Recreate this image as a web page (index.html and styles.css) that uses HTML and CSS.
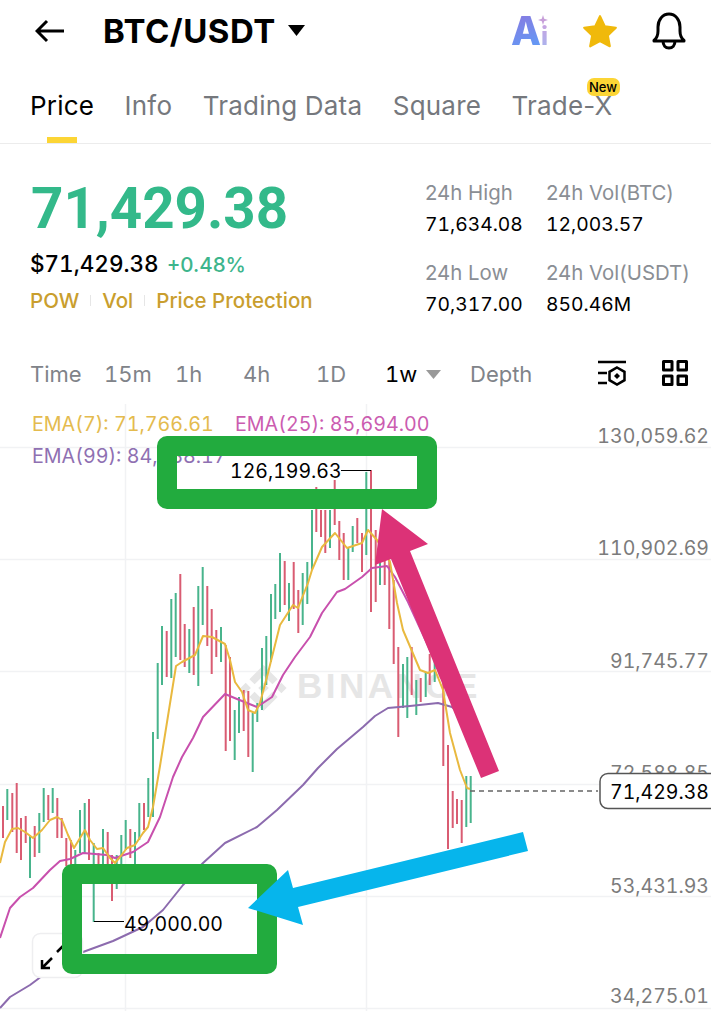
FILE: index.html
```html
<!DOCTYPE html>
<html lang="en">
<head>
<meta charset="utf-8">
<title>BTC/USDT</title>
<link rel="stylesheet" href="styles.css">
</head>
<body>
<div class="page">
  <header class="topbar">
    <svg class="back" viewBox="0 0 30 24" width="30" height="24"><path d="M29 12H2M12 2 2 12l10 10"/></svg>
    <h1 class="pair">BTC/USDT</h1>
    <svg class="pair-caret" viewBox="0 0 17 11" width="17" height="11"><path d="M0 0h17L8.500 11z"/></svg>
    <div class="top-icons">
      <div class="ai"><span class="ai-a">A</span><span class="ai-i">i</span>
        <svg class="spark" viewBox="0 0 10 10" width="10" height="10"><path d="M5 0 6.200 3.800 10 5 6.200 6.200 5 10 3.800 6.200 0 5 3.800 3.800z"/></svg>
      </div>
      <svg class="star" viewBox="0 0 36 34" width="38" height="36"><path d="M18 3l4.600 9.600 10.400 1.400-7.600 7.200 1.900 10.300L18 26.500 8.700 31.500l1.900-10.300L3 14l10.400-1.400z"/></svg>
      <svg class="bell" viewBox="0 0 36 38" width="36" height="38"><path d="M3 28.500c3-2.500 4-5 4-9.500v-4C7 8 11.500 2 18 2s11 6 11 13v4c0 4.500 1 7 4 9.500v.5H3zM12 29c0 4.500 2.500 7 6 7s6-2.500 6-7"/></svg>
    </div>
  </header>

  <nav class="tabs">
    <span class="tab tab-active">Price</span>
    <span class="tab">Info</span>
    <span class="tab">Trading Data</span>
    <span class="tab">Square</span>
    <span class="tab tab-new">Trade-X<span class="badge">New</span></span>
  </nav>

  <section class="summary">
    <div class="summary-main">
      <div class="last-price">71,429.38</div>
      <div class="fiat-row"><span class="fiat">$71,429.38</span><span class="change">+0.48%</span></div>
      <div class="tags"><span>POW</span><i class="tag-sep"></i><span>Vol</span><i class="tag-sep"></i><span>Price Protection</span></div>
    </div>
    <dl class="stats">
      <div class="stat"><dt>24h High</dt><dd>71,634.08</dd></div>
      <div class="stat"><dt>24h Vol(BTC)</dt><dd>12,003.57</dd></div>
      <div class="stat"><dt>24h Low</dt><dd>70,317.00</dd></div>
      <div class="stat"><dt>24h Vol(USDT)</dt><dd>850.46M</dd></div>
    </dl>
  </section>

  <div class="intervals">
    <span>Time</span><span>15m</span><span>1h</span><span>4h</span><span>1D</span>
    <span class="interval-active">1w<svg class="interval-caret" viewBox="0 0 15 9" width="15" height="9"><path d="M0 0h15L7.500 9z"/></svg></span>
    <span>Depth</span>
    <svg class="tool-icon" viewBox="0 0 30 28" width="30" height="28"><path d="M1 3h28M1 14h9M1 24h9"/><path d="M20 8.500l7.500 4.300v8.400L20 25.500l-7.500-4.300v-8.400z"/><path class="tool-dot" d="M20 14l3 3-3 3-3-3z"/></svg>
    <svg class="tool-icon tool-grid" viewBox="0 0 28 28" width="28" height="28"><path d="M2.500 2.500h8.500v8.500H2.500zM17 2.500h8.500v8.500H17zM2.500 17h8.500v8.500H2.500zM17 17h8.500v8.500H17z"/></svg>
  </div>

  <section class="chart">
    <svg class="chart-svg" viewBox="0 404 711 607" width="711" height="607">
      <path class="grid" d="M0 447.500H711M0 559.500H711M0 671.500H711M0 784.500H711M0 896.500H711M0 1008.500H711M125.500 404V1011M366.500 404V1011"/>
      <g class="watermark">
        <g transform="translate(240.500 665) scale(1.92)"><path d="M7.340 10.080 12 5.420l4.660 4.660 2.710-2.710L12 0 4.630 7.370zM0 12l2.710-2.710L5.420 12l-2.710 2.710zM7.340 13.920 12 18.580l4.660-4.660 2.710 2.700L12 24l-7.370-7.370zM18.580 12l2.710-2.710L24 12l-2.710 2.710zM14.750 12 12 9.250 9.970 11.280l-.23.240-.49.480L12 14.750z"/></g>
        <text class="wm-text" x="297" y="698">BINANCE</text>
      </g>
      <path class="candle-down" d="M3 806V838M12.300 793V832M16.700 783V853M21 818V860M25.700 816V843M34.700 826V857M48.300 795V820M57.300 798V838M61.700 818V838M66.300 838V866M71 840V866M89 799V860M98.500 853V866M107.700 832V866M112 855V901M130.300 829V858M144 803V830M166.700 631V677M180.300 574V660M184.700 624V667M193.700 607V675M207.300 586V646M211.700 609V674M216.300 630V657M225.700 645V751M230 657V741M243.700 690V731M248.300 691V757M284.700 561V605M293.700 562V609M298.300 590V633M316.300 487V532M321 510V537M325.300 510V553M334.700 480V525M339.300 521V560M343.700 533V580M357.300 518V543M362 533V572M371 470V612M375.700 530V602M384.700 555V585M389.300 560V629M393.700 580V664M398.300 647V737M411.700 647V695M420.700 678V702M429.700 654V685M443.300 683V766M448 745V849M452.700 791V828M457 799V824M461.700 800V843"/>
      <path class="candle-up" d="M7.300 789V820M30 835V878M39.300 813V853M43.700 788V822M52.700 788V813M75.300 850V866M80 810V853M84.700 803V853M93.700 843V922M103 829V866M116.700 855V889M121.300 835V866M125.700 820V850M135 832V866M139.300 803V840M148.300 778V817M153 732V817M157.700 663V739M162 626V685M171.300 599V678M175.700 593V657M189.300 629V673M198.300 586V686M202.700 567V625M221 627V662M234.700 710V760M239 697V733M252.700 713V772M257.300 703V722M262 648V710M266.300 636V685M271 594V662M275.300 584V619M280 553V612M289 583V621M302.700 573V625M307.300 562V604M312 510V570M330 510V548M348.300 548V580M352.700 526V552M366.300 472V555M380 553V585M403 664V708M407.300 657V718M416.300 680V715M425.700 672V697M434.700 660V682M466.300 776V827M470.700 776V823"/>
      <path class="ema99" d="M0 1008 10 997 30 985 50 970 83 952 113 941 143 927 163 910 183 885 203 863 225 843 257 827 277 810 303 785 318 768 337 749 363 727 375 716 388 708 410 706 438 703 452 707 469 722"/>
      <path class="ema25" d="M0 938 10 908 20 897 33 888 50 870 60 861 70 859 83 853 107 855 115 858 133 852 148 842 160 817 173 777 182 757 193 738 203 717 225 694 237 699 247 703 257 707 272 697 283 675 295 657 310 637 322 613 337 592 345 589 362 577 372 568 387 566 395 577 408 602 430 650 450 690 469 705"/>
      <path class="ema7" d="M0 863 5 842 12 829 18 828 25 832 33 838 42 830 50 820 57 817 62 820 68 835 74 848 80 838 85 830 90 840 97 849 103 848 110 858 115 863 120 857 127 848 135 845 143 833 148 827 153 807 160 766 176 666 182 662 195 655 203 636 212 637 225 644 230 660 235 682 242 692 248 710 255 713 260 703 268 673 280 625 293 605 298 608 308 583 312 570 322 547 335 533 347 548 362 543 368 530 377 540 390 562 397 603 403 630 420 670 428 673 435 670 443 690 450 733 460 770 467 788 470 789"/>
      <text class="legend legend-ema7" x="32" y="431">EMA(7): 71,766.61</text>
      <text class="legend legend-ema25" x="235" y="431">EMA(25): 85,694.00</text>
      <text class="legend legend-ema99" x="32" y="463">EMA(99): 84,688.17</text>
      <g class="axis">
        <text x="709" y="443">130,059.62</text>
        <text x="709" y="555">110,902.69</text>
        <text x="709" y="668">91,745.77</text>
        <text x="709" y="780">72,588.85</text>
        <text x="709" y="893">53,431.93</text>
        <text x="709" y="1003">34,275.01</text>
      </g>
      <path class="price-dash" d="M470 791H598"/>
      <rect class="price-tag" x="600" y="773.500" width="130" height="35" rx="8"/>
      <text class="price-tag-text" x="709" y="799">71,429.38</text>
      <rect class="expand-box" x="32.500" y="933.500" width="50" height="44" rx="8"/>
      <path class="expand-arrow" d="M42 968 52 958M42 960v8h8M57 952 67 942"/>
      <path class="leader" d="M341 470.500H371M94 921.500H124"/>
      <text class="extreme" x="230" y="478">126,199.63</text>
      <text class="extreme" x="124" y="931">49,000.00</text>
      <rect class="frame" x="167" y="446" width="260" height="53"/>
      <rect class="frame" x="72" y="874" width="195" height="90"/>
      <polygon class="arrow-pink" points="382,509 428,544 410,551 499,771 481,778 391,559 375,565"/>
      <polygon class="arrow-blue" points="248,908 288,870 293,888 523,832 528,851 298,907 303,925"/>
    </svg>
  </section>
</div>
</body>
</html>
```

FILE: styles.css
```css
* { box-sizing: border-box; margin: 0; padding: 0; }
html, body { background: #fff; }
body { font-family: Inter, "Liberation Sans", sans-serif; color: #000; overflow: hidden; }
.page { width: 711px; height: 1011px; overflow: hidden; display: flex; flex-direction: column; }

.topbar { height: 62px; display: flex; align-items: center; padding-left: 35px; }
.back { fill: none; stroke: #000; stroke-width: 3; margin-right: 38px; }
.pair { font-size: 33px; font-weight: 700; line-height: 40px; letter-spacing: .5px; }
.pair-caret { fill: #000; margin-left: 12px; }
.top-icons { margin-left: auto; display: flex; align-items: center; padding-right: 24px; }
.ai { position: relative; width: 40px; height: 34px; display: flex; align-items: flex-end; font-weight: 800; line-height: 1; }
.ai-a { font-size: 39px; line-height: 34px; background: linear-gradient(160deg, #8a79e0, #5f9cf7); -webkit-background-clip: text; background-clip: text; color: transparent; }
.ai-i { font-size: 25px; line-height: 24px; background: linear-gradient(180deg, #c9a3e0, #a9b4ee); -webkit-background-clip: text; background-clip: text; color: transparent; }
.spark { position: absolute; left: 27px; top: 1px; fill: #c79fd9; }
.star { fill: #f0b90b; stroke: #f0b90b; stroke-width: 2; stroke-linejoin: round; margin-left: 30px; margin-right: 32px; }
.bell { fill: none; stroke: #000; stroke-width: 3; stroke-linejoin: round; }

.tabs { height: 82px; display: flex; gap: 30.500px; padding: 26px 0 0 30px; border-bottom: 1px solid #ececec; }
.tab { position: relative; font-size: 26px; line-height: 36px; letter-spacing: .2px; color: #75787d; height: 36px; }
.tab-active { color: #000; }
.tab-active::after { content: ""; position: absolute; left: 17px; top: 49px; width: 30px; height: 6px; background: #fcd535; }
.badge { position: absolute; left: 75px; top: -10px; width: 33px; height: 18px; border-radius: 7px; background: #fcd535; color: #000; font-size: 13px; font-weight: 500; line-height: 18px; letter-spacing: 0; text-align: center; }

.summary { height: 204px; display: flex; padding: 34px 0 0 31px; }
.summary-main { width: 394px; }
.last-price { font-family: Roboto, sans-serif; font-size: 56.500px; line-height: 62px; font-weight: 700; color: #33b98a; }
.fiat-row { display: flex; align-items: baseline; gap: 8px; margin-top: 8px; margin-left: -1px; }
.fiat { font-size: 22.500px; line-height: 32px; font-weight: 500; font-variant-numeric: tabular-nums; }
.change { font-size: 20.500px; font-weight: 500; color: #3db58c; }
.tags { display: flex; align-items: center; gap: 11px; margin-top: 7px; margin-left: -1px; font-size: 20.500px; line-height: 28px; font-weight: 500; color: #c99e2e; }
.tag-sep { width: 1px; height: 11px; background: #e6e6e6; }
.stats { display: grid; grid-template-columns: 121px 1fr; row-gap: 18px; align-content: start; }
.stat dt { font-size: 20.400px; line-height: 30px; color: #8a8e94; }
.stat dd { font-size: 19.300px; line-height: 32px; color: #000; font-variant-numeric: tabular-nums; }

.intervals { height: 57px; display: grid; grid-template-columns: 74px 71px 68px 73px 69px 85px 127px 64px 28px; align-items: center; padding: 0 0 3px 30px; font-size: 22px; font-variant-numeric: tabular-nums; color: #808389; }
.interval-active { color: #000; display: flex; align-items: center; gap: 9px; }
.interval-caret { fill: #999; }
.tool-icon { fill: none; stroke: #000; stroke-width: 2.500; margin-bottom: 2px; }
.tool-dot { fill: #000; stroke: none; }
.tool-grid { stroke-width: 3; stroke-linejoin: round; }

.chart { height: 607px; }
.chart-svg { display: block; font-variant-numeric: tabular-nums; }
.grid { fill: none; stroke: #f1f2f4; stroke-width: 1.500; }
.watermark { fill: #e6e6e6; }
.wm-text { font-family: "Liberation Sans", sans-serif; font-weight: 700; font-size: 35px; letter-spacing: 3.500px; }
.candle-down, .candle-up { fill: none; stroke-width: 2; }
.candle-down { stroke: #d95c72; }
.candle-up { stroke: #48b48c; }
.ema7, .ema25, .ema99 { fill: none; stroke-width: 2; stroke-linejoin: round; }
.ema7 { stroke: #e9b93f; }
.ema25 { stroke: #c850ad; }
.ema99 { stroke: #8c6bae; }
.legend { font-size: 19.700px; }
.legend-ema7 { fill: #e4bb4e; }
.legend-ema25 { fill: #cb5cb0; }
.legend-ema99 { fill: #8f70b2; }
.axis text { font-size: 19.500px; fill: #7b7b7b; text-anchor: end; }
.price-dash { stroke: #666; stroke-width: 1.500; stroke-dasharray: 5 4; fill: none; }
.price-tag { fill: #fff; stroke: #555; stroke-width: 1.500; }
.price-tag-text { font-size: 19.500px; text-anchor: end; fill: #000; }
.expand-box { fill: #fff; stroke: #eeeef0; stroke-width: 1.500; }
.expand-arrow { fill: none; stroke: #000; stroke-width: 2.500; }
.leader { fill: none; stroke: #000; stroke-width: 1; }
.extreme { font-size: 19.500px; fill: #000; }
.frame { fill: none; stroke: #22ab3e; stroke-width: 20; stroke-linejoin: round; }
.arrow-pink { fill: #dc3277; }
.arrow-blue { fill: #06b5ec; }
```
